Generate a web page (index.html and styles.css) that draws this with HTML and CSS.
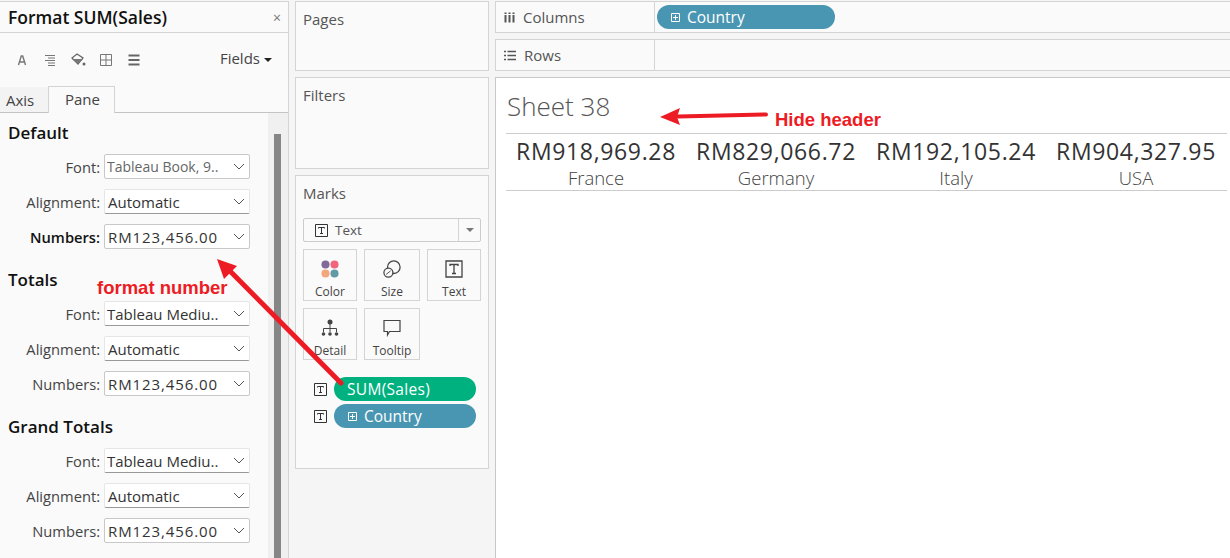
FILE: index.html
```html
<!DOCTYPE html>
<html lang="en">
<head>
    <meta charset="UTF-8">
    <title>Format SUM(Sales)</title>
    <link rel="stylesheet" href="styles.css">
</head>
<body>
    <main class="app">
        <!-- Format pane -->
        <aside class="format">
            <div class="format-title">
                <h1>Format SUM(Sales)</h1>
                <span class="close">×</span>
            </div>
            <div class="toolbar">
                <svg class="tool" width="14" height="14" viewBox="0 0 14 14"><path d="M3.500 12 L6.300 3 H7.700 L10.500 12 M4.600 9 H9.400" fill="none" stroke="#777" stroke-width="1.400"/></svg>
                <svg class="tool" width="14" height="14" viewBox="0 0 14 14"><path d="M2 2.500H12M5 5H12M2 7.500H12M5 10H12M5 12.500H12" stroke="#777" stroke-width="1"/></svg>
                <svg class="tool bucket" width="16" height="16" viewBox="0 0 16 16"><path d="M2 6 L7 2 L13 6 L8 12 Z" fill="none" stroke="#666" stroke-width="1.200"/><path d="M2 7 H13 L8 12 Z" fill="#777"/><circle cx="14" cy="12" r="1.500" fill="#666"/></svg>
                <svg class="tool" width="14" height="14" viewBox="0 0 14 14"><path d="M1.500 1.500H12.500V12.500H1.500ZM7 1.500V12.500M1.500 7H12.500" fill="none" stroke="#777" stroke-width="1"/></svg>
                <svg class="tool" width="14" height="14" viewBox="0 0 14 14"><path d="M1.500 2.500H12.500M1.500 7H12.500M1.500 11.500H12.500" stroke="#666" stroke-width="2"/></svg>
                <span class="fields">Fields<i class="caret"></i></span>
            </div>
            <div class="tabs">
                <span class="tab">Axis</span>
                <span class="tab active">Pane</span>
            </div>
            <div class="format-body">
                <div class="sections">
                    <section class="group">
                        <h2>Default</h2>
                        <div class="row"><label>Font:</label><div class="select flat"><span class="value tight muted">Tableau Book, 9..</span><svg class="chev" width="12" height="7" viewBox="0 0 12 7"><path d="M1 1 L6 6 L11 1" fill="none" stroke="#555"/></svg></div></div>
                        <div class="row"><label>Alignment:</label><div class="select"><span class="value">Automatic</span><svg class="chev" width="12" height="7" viewBox="0 0 12 7"><path d="M1 1 L6 6 L11 1" fill="none" stroke="#555"/></svg></div></div>
                        <div class="row"><label class="strong">Numbers:</label><div class="select flat"><span class="value num">RM123,456.00</span><svg class="chev" width="12" height="7" viewBox="0 0 12 7"><path d="M1 1 L6 6 L11 1" fill="none" stroke="#555"/></svg></div></div>
                    </section>
                    <section class="group">
                        <h2>Totals</h2>
                        <div class="row"><label>Font:</label><div class="select"><span class="value tight">Tableau Mediu..</span><svg class="chev" width="12" height="7" viewBox="0 0 12 7"><path d="M1 1 L6 6 L11 1" fill="none" stroke="#555"/></svg></div></div>
                        <div class="row"><label>Alignment:</label><div class="select"><span class="value">Automatic</span><svg class="chev" width="12" height="7" viewBox="0 0 12 7"><path d="M1 1 L6 6 L11 1" fill="none" stroke="#555"/></svg></div></div>
                        <div class="row"><label>Numbers:</label><div class="select flat"><span class="value num">RM123,456.00</span><svg class="chev" width="12" height="7" viewBox="0 0 12 7"><path d="M1 1 L6 6 L11 1" fill="none" stroke="#555"/></svg></div></div>
                    </section>
                    <section class="group">
                        <h2>Grand Totals</h2>
                        <div class="row"><label>Font:</label><div class="select"><span class="value tight">Tableau Mediu..</span><svg class="chev" width="12" height="7" viewBox="0 0 12 7"><path d="M1 1 L6 6 L11 1" fill="none" stroke="#555"/></svg></div></div>
                        <div class="row"><label>Alignment:</label><div class="select"><span class="value">Automatic</span><svg class="chev" width="12" height="7" viewBox="0 0 12 7"><path d="M1 1 L6 6 L11 1" fill="none" stroke="#555"/></svg></div></div>
                        <div class="row"><label>Numbers:</label><div class="select flat"><span class="value num">RM123,456.00</span><svg class="chev" width="12" height="7" viewBox="0 0 12 7"><path d="M1 1 L6 6 L11 1" fill="none" stroke="#555"/></svg></div></div>
                    </section>
                </div>
                <div class="scroll"><div class="thumb"></div></div>
            </div>
        </aside>

        <!-- Pages, filters, marks -->
        <div class="cards">
            <div class="card pages">Pages</div>
            <div class="card filters">Filters</div>
            <div class="card marks">
                <div class="marks-title">Marks</div>
                <div class="mark-type">
                    <svg class="t-box" width="13" height="13" viewBox="0 0 13 13"><path d="M.5 .5H12.500V12.500H.5ZM3.500 4.500V3.500H9.500V4.500M6.500 3.500V9.500M5 9.500H8" fill="none" stroke="#333"/></svg>
                    <span class="mark-name">Text</span>
                    <span class="mark-drop"><i class="caret grey"></i></span>
                </div>
                <div class="mark-grid">
                    <div class="mark-btn">
                        <svg width="18" height="18" viewBox="0 0 20 20"><circle cx="5" cy="5" r="4.500" fill="#7f6a99"/><circle cx="15" cy="5" r="4.500" fill="#f0657c"/><circle cx="5" cy="15" r="4.500" fill="#f4a67c"/><circle cx="15" cy="15" r="4.500" fill="#5f9aa5"/></svg>
                        <span>Color</span>
                    </div>
                    <div class="mark-btn">
                        <svg width="18" height="18" viewBox="0 0 20 20"><circle cx="12" cy="8" r="7" fill="none" stroke="#444" stroke-width="1.400"/><circle cx="6" cy="14" r="5" fill="#fafafa" stroke="#444" stroke-width="1.400"/><path d="M3.500 16 L8.500 12" stroke="#444"/></svg>
                        <span>Size</span>
                    </div>
                    <div class="mark-btn">
                        <svg width="18" height="18" viewBox="0 0 18 18"><path d="M1 1H17V17H1ZM5 6V4.500H13V6M9 4.500V13.500M7 13.500H11" fill="none" stroke="#444" stroke-width="1.300"/></svg>
                        <span>Text</span>
                    </div>
                    <div class="mark-btn">
                        <svg width="18" height="18" viewBox="0 0 18 18"><circle cx="9" cy="3" r="2.500" fill="#444"/><circle cx="2.500" cy="15" r="1.800" fill="#444"/><circle cx="9" cy="15" r="1.800" fill="#444"/><circle cx="15.500" cy="15" r="1.800" fill="#444"/><path d="M9 5V13M2.500 13V9.500H15.500V13" fill="none" stroke="#444"/></svg>
                        <span>Detail</span>
                    </div>
                    <div class="mark-btn">
                        <svg width="18" height="18" viewBox="0 0 18 18"><path d="M1 1.500H17V12.500H6.500L4.500 16V12.500H1Z" fill="none" stroke="#444" stroke-width="1.200"/></svg>
                        <span>Tooltip</span>
                    </div>
                </div>
                <div class="mark-pills">
                    <div class="pill-row">
                        <svg width="13" height="13" viewBox="0 0 13 13"><path d="M.5 .5H12.500V12.500H.5ZM3.500 4.500V3.500H9.500V4.500M6.500 3.500V9.500M5 9.500H8" fill="none" stroke="#333"/></svg>
                        <div class="pill green">SUM(Sales)</div>
                    </div>
                    <div class="pill-row">
                        <svg width="13" height="13" viewBox="0 0 13 13"><path d="M.5 .5H12.500V12.500H.5ZM3.500 4.500V3.500H9.500V4.500M6.500 3.500V9.500M5 9.500H8" fill="none" stroke="#333"/></svg>
                        <div class="pill blue"><svg width="9" height="9" viewBox="0 0 9 9"><path d="M.5 .5H8.500V8.500H.5ZM4.500 2V7M2 4.500H7" fill="none" stroke="#fff"/></svg>Country</div>
                    </div>
                </div>
            </div>
        </div>

        <!-- Shelves and view -->
        <div class="work">
            <div class="shelf">
                <div class="shelf-label">
                    <svg width="11" height="11" viewBox="0 0 11 11"><path d="M1.500 3V10.500M5.500 3V10.500M9.500 3V10.500M1.500 .5V2M5.500 .5V2M9.500 .5V2" stroke="#555" stroke-width="2"/></svg>
                    Columns
                </div>
                <div class="shelf-body"><div class="pill blue wide"><svg width="9" height="9" viewBox="0 0 9 9"><path d="M.5 .5H8.500V8.500H.5ZM4.500 2V7M2 4.500H7" fill="none" stroke="#fff"/></svg>Country</div></div>
            </div>
            <div class="shelf">
                <div class="shelf-label">
                    <svg width="12" height="11" viewBox="0 0 12 11"><path d="M0 1.500H2M3.500 1.500H12M0 5.500H2M3.500 5.500H12M0 9.500H2M3.500 9.500H12" stroke="#555" stroke-width="1.600"/></svg>
                    Rows
                </div>
                <div class="shelf-body"></div>
            </div>
            <div class="view">
                <h3 class="sheet-title">Sheet 38</h3>
                <div class="viz">
                    <div class="cell"><b>RM918,969.28</b><span>France</span></div>
                    <div class="cell"><b>RM829,066.72</b><span>Germany</span></div>
                    <div class="cell"><b>RM192,105.24</b><span>Italy</span></div>
                    <div class="cell"><b>RM904,327.95</b><span>USA</span></div>
                </div>
            </div>
        </div>

        <!-- Annotations drawn over the screenshot -->
        <svg class="arrows" width="1230" height="558" viewBox="0 0 1230 558">
            <path d="M766 114.500 L678 116.500" stroke="#ed1c24" stroke-width="4" stroke-linecap="round"/>
            <path d="M660 117 L680 108 L677 117 L680 125 Z" fill="#ed1c24"/>
            <path d="M341 383 L229 270" stroke="#ed1c24" stroke-width="5" stroke-linecap="round"/>
            <path d="M217 259 L237 266 L224 279 Z" fill="#ed1c24"/>
        </svg>
        <span class="note note-header">Hide header</span>
        <span class="note note-number">format number</span>
    </main>
</body>
</html>
```

FILE: styles.css
```css
* {
    box-sizing: border-box;
}
html, body {
    margin: 0;
    padding: 0;
    height: 100%;
    overflow: hidden;
}
body {
    font-family: "Open Sans", "Noto Sans", sans-serif;
    background-color: #f5f5f5;
    color: #333;
}
.app {
    position: relative;
    display: flex;
    width: 1230px;
    height: 558px;
    padding-top: 1px;
}

/* format pane */
.format {
    width: 289px;
    flex: none;
    display: flex;
    flex-direction: column;
    background: #fafafa;
    border-top: 1px solid #d4d4d4;
    border-right: 1px solid #d4d4d4;
}
.format-title {
    height: 31px;
    flex: none;
    display: flex;
    align-items: center;
    justify-content: space-between;
    padding: 0 7px 0 8px;
    border-bottom: 1px solid #d4d4d4;
}
.format-title h1 {
    margin: 0;
    font-size: 17.500px;
    font-weight: 600;
    color: #111;
}
.close {
    font-size: 14px;
    color: #777;
}
.toolbar {
    height: 53px;
    flex: none;
    display: flex;
    align-items: center;
    padding: 0 16px 0 15px;
    gap: 14px;
}
.tool.bucket {
    margin: 0 -1px;
}
.fields {
    margin: -3px 0 0 auto;
    font-size: 15px;
    color: #444;
}
.caret {
    display: inline-block;
    margin-left: 4px;
    vertical-align: middle;
    border-left: 4px solid transparent;
    border-right: 4px solid transparent;
    border-top: 4px solid #222;
}
.caret.grey {
    margin: 0;
    border-top-color: #777;
}
.tabs {
    height: 27px;
    flex: none;
    display: flex;
    align-items: flex-end;
    border-bottom: 1px solid #c4c4c4;
}
.tab {
    width: 48px;
    height: 25px;
    padding: 3px 0 0 6px;
    font-size: 15px;
    color: #444;
    background: #f3f3f3;
}
.tab.active {
    width: 67px;
    height: 27px;
    margin-bottom: -1px;
    padding: 2px 0 0 16px;
    background: #fafafa;
    border: 1px solid #d4d4d4;
    border-bottom: none;
}
.format-body {
    flex: 1;
    display: flex;
    min-height: 0;
}
.sections {
    flex: 1;
    padding: 8px 0 0 8px;
}
.group {
    height: 147px;
}
.group h2 {
    margin: 0;
    height: 33px;
    font-size: 17px;
    line-height: 24px;
    font-weight: 600;
    color: #111;
}
.row {
    display: flex;
    align-items: center;
    height: 25px;
    margin-bottom: 10px;
}
.row label {
    width: 96px;
    padding-right: 4px;
    font-size: 14.700px;
    text-align: right;
    color: #444;
}
.row label.strong {
    font-weight: 600;
    color: #111;
}
.select {
    width: 146px;
    height: 25px;
    display: flex;
    align-items: center;
    justify-content: space-between;
    padding: 0 4px 0 3px;
    background: #fff;
    border: 1px solid #e6e6e6;
    border-bottom: 1px solid #999;
    border-radius: 2px;
    font-size: 15px;
    color: #333;
}
.select.flat {
    border: 1px solid #c8c8c8;
}
.value.num {
    letter-spacing: .9px;
}
.value.tight {
    margin-left: -1px;
}
.value.muted {
    font-size: 14px;
    color: #666;
}
.chev {
    flex: none;
}
.scroll {
    width: 20px;
    flex: none;
    padding: 21px 7px 0 6px;
    background: #f0f0f0;
}
.thumb {
    height: 100%;
    background: #868686;
}

/* middle cards */
.cards {
    width: 194px;
    flex: none;
    margin: 0 6px;
    display: flex;
    flex-direction: column;
    gap: 6px;
}
.card {
    background: #fafafa;
    border: 1px solid #d4d4d4;
    padding: 7px 7px;
    font-size: 15px;
    color: #555;
}
.pages {
    height: 70px;
}
.filters {
    height: 92px;
}
.marks {
    height: 294px;
}
.mark-type {
    height: 24px;
    margin-top: 15px;
    display: flex;
    align-items: center;
    background: #fafafa;
    border: 1px solid #ccc;
    border-radius: 2px;
}
.t-box {
    margin-left: 11px;
}
.mark-name {
    flex: 1;
    margin-left: 7px;
    font-size: 13.500px;
}
.mark-drop {
    width: 22px;
    height: 100%;
    display: flex;
    align-items: center;
    justify-content: center;
    border-left: 1px solid #d4d4d4;
}
.mark-grid {
    display: grid;
    grid-template-columns: 54px 56px 54px;
    grid-auto-rows: 52px;
    column-gap: 7px;
    row-gap: 7px;
    margin-top: 7px;
}
.mark-btn {
    display: flex;
    flex-direction: column;
    align-items: center;
    justify-content: flex-end;
    gap: 5px;
    border: 1px solid #d4d4d4;
    font-size: 12px;
    color: #444;
}
.mark-pills {
    margin: 17px 0 0 11px;
    display: flex;
    flex-direction: column;
    gap: 3px;
}
.pill-row {
    display: flex;
    align-items: center;
    gap: 7px;
}
.pill {
    width: 142px;
    height: 24px;
    display: flex;
    align-items: center;
    gap: 7px;
    padding-left: 13px;
    border-radius: 12px;
    font-size: 15.500px;
    color: #fff;
}
.pill.green {
    background: #00b180;
    letter-spacing: .3px;
}
.pill.blue {
    background: #4996b2;
    padding-left: 14px;
}
.pill.wide {
    width: 178px;
}

/* shelves and view */
.work {
    flex: 1;
    min-width: 0;
    display: flex;
    flex-direction: column;
    gap: 6px;
}
.shelf {
    height: 32px;
    flex: none;
    display: flex;
    background: #fafafa;
    border: 1px solid #d4d4d4;
    border-right: none;
}
.shelf-label {
    width: 159px;
    flex: none;
    display: flex;
    align-items: center;
    gap: 8px;
    padding-left: 8px;
    border-right: 1px solid #d4d4d4;
    font-size: 15px;
    color: #555;
}
.shelf-body {
    flex: 1;
    display: flex;
    align-items: center;
    padding-left: 2px;
}
.view {
    flex: 1;
    background: #fff;
    border: 1px solid #c8c8c8;
    border-right: none;
    border-bottom: none;
    padding: 0 3px 0 10px;
}
.sheet-title {
    margin: 0;
    height: 55px;
    padding: 11px 0 0 1px;
    font-size: 26px;
    line-height: 34px;
    font-weight: 300;
    color: #555;
}
.viz {
    display: grid;
    grid-template-columns: repeat(4, 180px);
    height: 58px;
    border-top: 1px solid #ccc;
    border-bottom: 1px solid #ccc;
}
.cell {
    display: flex;
    flex-direction: column;
    align-items: center;
    color: #444;
}
.cell b {
    margin-top: 2px;
    font-size: 23px;
    letter-spacing: .65px;
    line-height: 30px;
    font-weight: 400;
    color: #333;
}
.cell span {
    font-size: 18.500px;
    line-height: 24px;
    font-weight: 300;
    color: #444;
}

/* annotations */
.arrows {
    position: absolute;
    left: 0;
    top: 0;
    pointer-events: none;
}
.note {
    position: absolute;
    font-family: "Liberation Sans", Arial, sans-serif;
    font-size: 18.500px;
    font-weight: 700;
    line-height: 20px;
    color: #ed1c24;
}
.note-header {
    left: 775px;
    top: 110px;
}
.note-number {
    left: 97px;
    top: 278px;
}
```
